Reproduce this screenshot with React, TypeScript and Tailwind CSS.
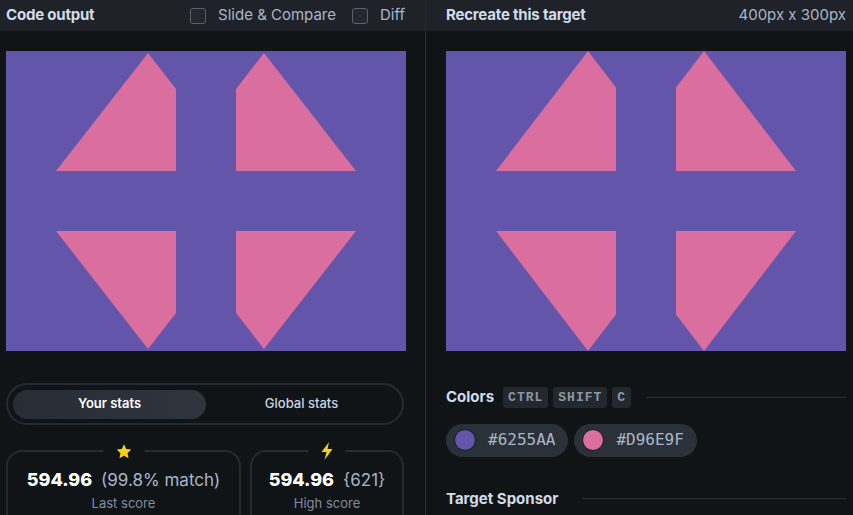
import type { ReactNode } from "react";

const PURPLE = "#6255AA";
const PINK = "#D96E9F";

function Artwork({ apex }: { apex: number }) {
  // apex is the top gap of the triangles (0 for target, 2 for the output)
  const top = apex;
  const bot = 300 - apex;
  const cut = apex + ((120 - apex) * 28) / 92;
  return (
    <svg width="400" height="300" viewBox="0 0 400 300" className="block">
      <rect width="400" height="300" fill={PURPLE} />
      <polygon points={`50,120 142,${top} 170,${cut} 170,120`} fill={PINK} />
      <polygon points={`230,120 230,${cut} 258,${top} 350,120`} fill={PINK} />
      <polygon points={`50,180 170,180 170,${300 - cut} 142,${bot}`} fill={PINK} />
      <polygon points={`230,180 350,180 258,${bot} 230,${300 - cut}`} fill={PINK} />
    </svg>
  );
}

function Checkbox({ label }: { label: string }) {
  return (
    <label className="flex items-center gap-[12px]">
      <span className="h-[16px] w-[16px] rounded-[3px] border border-[#5a606a] bg-[#24282e]" />
      <span className="text-[15px] text-[#a9b6c8]">{label}</span>
    </label>
  );
}

function StatCard({
  icon,
  value,
  extra,
  label,
  className,
}: {
  icon: ReactNode;
  value: string;
  extra: string;
  label: string;
  className: string;
}) {
  return (
    <div className={`relative h-[80px] rounded-[16px] border-2 border-[#262b32] ${className}`}>
      <div className="absolute left-1/2 top-[-12px] flex h-[22px] -translate-x-1/2 items-center justify-center bg-[#111417] px-[12px]">
        {icon}
      </div>
      <div className="flex flex-col items-center pt-[14px]">
        <div className="flex items-baseline gap-[9px]">
          <span className="text-[18px] font-extrabold text-white">{value}</span>
          <span className="text-[17px] text-[#a9b6c8]">{extra}</span>
        </div>
        <div className="text-[13px] text-[#7f8da0]">{label}</div>
      </div>
    </div>
  );
}

function Star() {
  return (
    <svg width="17" height="17" viewBox="0 0 24 24">
      <path
        d="M12 1.8l3.1 6.6 7.2.9-5.3 5 1.4 7.1L12 17.9l-6.4 3.5 1.4-7.1-5.3-5 7.2-.9z"
        fill="#f7d01c"
      />
    </svg>
  );
}

function Bolt() {
  return (
    <svg width="13" height="18" viewBox="0 0 13 18">
      <path d="M8.5 0L1 10h5l-2 8 8-11H7l1.5-7z" fill="#f7d01c" />
    </svg>
  );
}

function Kbd({ children }: { children: ReactNode }) {
  return (
    <span className="rounded-[3px] bg-[#23282e] px-[5px] py-[1px] font-['Liberation_Mono',monospace] text-[13px] font-bold tracking-[1px] text-[#8d97a4]">
      {children}
    </span>
  );
}

function ColorChip({ color }: { color: string }) {
  return (
    <div className="flex h-[33px] items-center gap-[12px] rounded-full bg-[#2a3139] pl-[8px] pr-[13px]">
      <span
        className="h-[22px] w-[22px] rounded-full border border-[#14171b]"
        style={{ backgroundColor: color }}
      />
      <span className="font-['DejaVu_Sans_Mono',monospace] text-[16px] text-[#a9b6c8]">{color}</span>
    </div>
  );
}

export default function App() {
  return (
    <div className="flex h-[515px] w-[853px] overflow-hidden bg-[#111417] font-['Inter',sans-serif]">
      {/* left: code output */}
      <div className="flex w-[426px] shrink-0 flex-col border-r border-[#262b31]">
        <header className="flex h-[31px] shrink-0 items-center bg-[#1f2329] pl-[6px] pr-[20px]">
          <h2 className="text-[15px] font-bold tracking-[-0.2px] text-[#d2dcea]">Code output</h2>
          <div className="ml-auto flex items-center gap-[16px]">
            <Checkbox label="Slide & Compare" />
            <Checkbox label="Diff" />
          </div>
        </header>
        <div className="shrink-0 px-[6px] pt-[20px]">
          <Artwork apex={2} />
        </div>
        <div className="shrink-0 px-[6px] pt-[32px]">
          <div className="flex h-[42px] w-[398px] items-center rounded-full border-2 border-[#262b32] p-[5px]">
            <button className="h-[29px] w-[193px] rounded-full bg-gradient-to-r from-[#262d35] to-[#2e353d] text-[13px] font-semibold text-white">
              Your stats
            </button>
            <button className="h-[29px] flex-1 text-[13px] font-medium text-[#c9d4e2]">Global stats</button>
          </div>
          <div className="mt-[25px] flex gap-[9px]">
            <StatCard
              className="w-[235px] shrink-0"
              icon={<Star />}
              value="594.96"
              extra="(99.8% match)"
              label="Last score"
            />
            <StatCard
              className="w-[154px] shrink-0"
              icon={<Bolt />}
              value="594.96"
              extra="{621}"
              label="High score"
            />
          </div>
        </div>
      </div>

      {/* right: target */}
      <div className="flex flex-1 flex-col">
        <header className="flex h-[31px] shrink-0 items-center bg-[#1f2329] pl-[20px] pr-[7px]">
          <h2 className="text-[15px] font-bold tracking-[-0.2px] text-[#d2dcea]">Recreate this target</h2>
          <span className="ml-auto text-[15px] text-[#a9b6c8]">400px x 300px</span>
        </header>
        <div className="shrink-0 pl-[20px] pt-[20px]">
          <Artwork apex={0} />
        </div>
        <div className="pl-[20px] pr-[7px] pt-[35px]">
          <div className="flex items-center">
            <h3 className="text-[15px] font-bold text-[#d2dcea]">Colors</h3>
            <div className="ml-[9px] flex gap-[5px]">
              <Kbd>CTRL</Kbd>
              <Kbd>SHIFT</Kbd>
              <Kbd>C</Kbd>
            </div>
            <div className="ml-[15px] h-px flex-1 bg-[#2a2f36]" />
          </div>
          <div className="mt-[15px] flex gap-[6px]">
            <ColorChip color="#6255AA" />
            <ColorChip color="#D96E9F" />
          </div>
          <div className="mt-[31px] flex items-center">
            <h3 className="text-[15px] font-bold text-[#d2dcea]">Target Sponsor</h3>
            <div className="ml-[24px] h-px flex-1 bg-[#2a2f36]" />
          </div>
        </div>
      </div>
    </div>
  );
}
